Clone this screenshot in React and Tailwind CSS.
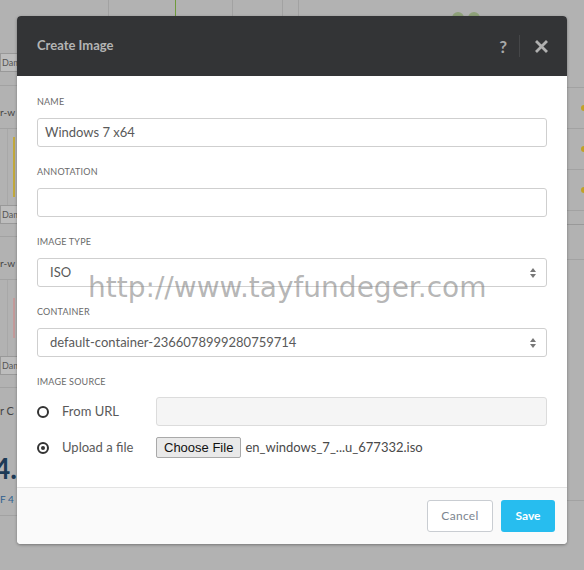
import React from "react";

function Radio({ checked }) {
  return (
    <span className="flex h-[12px] w-[12px] items-center justify-center rounded-full border-[2px] border-[#333]">
      {checked ? <span className="h-[4px] w-[4px] rounded-full bg-[#333]" /> : null}
    </span>
  );
}

function SelectArrows() {
  return (
    <svg width="8" height="12" viewBox="0 0 8 12" className="text-[#777]">
      <path d="M4 1 L7 5 L1 5 Z" fill="currentColor" />
      <path d="M4 11 L7 7 L1 7 Z" fill="currentColor" />
    </svg>
  );
}

function Label({ children }) {
  return (
    <div className="text-[9px] uppercase leading-[12px] tracking-[0.2px] text-[#6a6a6a]">{children}</div>
  );
}

function DamBox() {
  return (
    <div className="h-[19px] w-[20px] shrink-0 border border-[#999] bg-[#bdbdbd] pl-[1px] text-[9px] leading-[17px] text-[#555]">
      Dam
    </div>
  );
}

function ChartCell({ color, h }) {
  return (
    <div className="flex h-[77px] shrink-0 border-t border-[#a2a2a2]">
      <div className="w-[8px] border-r border-[#a8a8a8]" />
      <div className="flex items-center pl-[5px]">
        <div className={`w-[2px] ${h} ${color}`} />
      </div>
    </div>
  );
}

export default function App() {
  return (
    <div className="relative h-[570px] w-[584px] overflow-hidden bg-[#b2b2b2] font-['Lato',sans-serif]">
      {/* dimmed page behind the modal */}
      <div className="flex h-full w-full">
        <div className="flex w-[22px] shrink-0 flex-col text-[#444]">
          <div className="h-[53px] shrink-0" />
          <DamBox />
          <div className="h-[13px] shrink-0" />
          <div className="flex h-[43px] shrink-0 items-center border-t border-[#a2a2a2] pt-[10px] text-[10px]">r-w</div>
          <ChartCell color="bg-[#c2a93c]" h="h-[60px]" />
          <DamBox />
          <div className="h-[12px] shrink-0" />
          <div className="flex h-[43px] shrink-0 items-center border-t border-[#a2a2a2] pt-[10px] text-[10px]">r-w</div>
          <ChartCell color="bg-[#c49a9a]" h="h-[40px]" />
          <DamBox />
          <div className="h-[12px] shrink-0" />
          <div className="flex h-[40px] shrink-0 items-center border-t border-[#a2a2a2] pt-[8px] text-[11px]">r C</div>
          <div className="ml-[-6px] mt-[25px] text-[28px] font-bold leading-[32px] text-[#1d3a56]">4.0</div>
          <div className="mt-[8px] text-[10px] text-[#2f5f8f]">F 4</div>
          <div className="mt-[8px] h-[1px] bg-[#a2a2a2]" />
        </div>

        <div className="flex flex-1 items-start">
          <div className="ml-[86px] h-[16px] w-[1px] bg-[#a2a2a2]" />
          <div className="ml-[66px] h-[16px] w-[1px] bg-[#6f9a3c]" />
          <div className="ml-[56px] h-[16px] w-[1px] bg-[#a2a2a2]" />
          <div className="ml-[49px] h-[16px] w-[1px] bg-[#a2a2a2]" />
          <div className="ml-[15px] h-[16px] w-[1px] bg-[#a2a2a2]" />
          <div className="ml-[153px] mt-[12px] flex gap-[4px]">
            <div className="h-[8px] w-[12px] rounded-t-full bg-[#8fa27a]" />
            <div className="h-[8px] w-[12px] rounded-t-full bg-[#8fa27a]" />
          </div>
        </div>

        <div className="flex w-[20px] shrink-0 flex-col">
          <div className="h-[87px] shrink-0" />
          {[0, 1, 2].map((i) => (
            <div key={i} className="flex h-[41px] shrink-0 items-center justify-end border-t border-[#a2a2a2]">
              <div className="mr-[-3px] h-[6px] w-[6px] rounded-full bg-[#c2a227]" />
            </div>
          ))}
          <div className="h-[14px] shrink-0 border-t border-[#a2a2a2]" />
          <div className="h-[35px] shrink-0 border-t border-[#999]" />
          <div className="h-[241px] shrink-0 border-t border-[#a2a2a2]" />
          <div className="h-[1px] shrink-0 bg-[#a2a2a2]" />
        </div>
      </div>

      {/* modal */}
      <div className="absolute left-[17px] top-[16px] flex h-[528px] w-[550px] flex-col overflow-hidden rounded-[4px] bg-white shadow-[0_1px_3px_rgba(0,0,0,0.35)]">
        <div className="flex h-[60px] shrink-0 items-center bg-[#333436] pl-[20px] pr-[19px]">
          <div className="flex-1 text-[13px] font-bold text-[#b4b4b4]">Create Image</div>
          <div className="text-[17px] font-bold leading-none text-[#a9a9a9]">?</div>
          <div className="ml-[12px] mr-[15px] h-[22px] w-[1px] bg-[#454648]" />
          <svg width="13" height="13" viewBox="0 0 13 13">
            <path d="M2 2 L11 11 M11 2 L2 11" stroke="#b0b0b0" strokeWidth="2.8" strokeLinecap="square" />
          </svg>
        </div>

        <div className="flex flex-1 flex-col px-[20px] pt-[20px]">
          <Label>Name</Label>
          <div className="mt-[10px] flex h-[29px] items-center rounded-[3px] border border-[#cfcfcf] px-[7px] text-[13px] text-[#5a5a5a]">
            Windows 7 x64
          </div>

          <div className="mt-[19px]"><Label>Annotation</Label></div>
          <div className="mt-[10px] h-[29px] rounded-[3px] border border-[#cfcfcf]" />

          <div className="mt-[19px]"><Label>Image Type</Label></div>
          <div className="mt-[10px] flex h-[29px] items-center rounded-[3px] border border-[#cfcfcf] pl-[12px] pr-[9px] text-[13px] text-[#5a5a5a]">
            <span className="flex-1">ISO</span>
            <SelectArrows />
          </div>

          <div className="mt-[19px]"><Label>Container</Label></div>
          <div className="mt-[10px] flex h-[29px] items-center rounded-[3px] border border-[#cfcfcf] pl-[12px] pr-[9px] text-[13px] text-[#5a5a5a]">
            <span className="flex-1">default-container-2366078999280759714</span>
            <SelectArrows />
          </div>

          <div className="mt-[19px]"><Label>Image Source</Label></div>
          <div className="mt-[9px] flex h-[29px] items-center">
            <Radio />
            <span className="ml-[13px] w-[94px] text-[13px] text-[#5a5a5a]">From URL</span>
            <div className="h-[29px] flex-1 rounded-[3px] border border-[#dcdcdc] bg-[#f5f5f5]" />
          </div>
          <div className="mt-[7px] flex h-[29px] items-center">
            <Radio checked />
            <span className="ml-[13px] w-[94px] text-[13px] text-[#5a5a5a]">Upload a file</span>
            <button className="h-[21px] rounded-[2px] border border-[#a9a9a9] bg-[#e9e9e9] px-[7px] font-['Liberation_Sans',sans-serif] text-[13px] leading-[19px] text-[#111]">
              Choose File
            </button>
            <span className="ml-[4px] text-[13px] text-[#4a4a4a]">en_windows_7_...u_677332.iso</span>
          </div>
        </div>

        <div className="flex h-[57px] shrink-0 items-center justify-end gap-[8px] border-t border-[#e3e3e3] bg-[#fafafa] pr-[12px]">
          <button className="h-[32px] w-[66px] rounded-[3px] border border-[#c9cdd2] bg-white text-[12px] tracking-[0.3px] text-[#7c8590]">
            Cancel
          </button>
          <button className="h-[32px] w-[54px] rounded-[3px] bg-[#27bdef] text-[12px] font-bold text-white">
            Save
          </button>
        </div>
      </div>

      {/* watermark */}
      <div className="pointer-events-none absolute left-[88px] top-[270px] font-['DejaVu_Sans',sans-serif] text-[28px] leading-[36px] text-[rgba(120,120,120,0.55)]">
        http://www.tayfundeger.com
      </div>
    </div>
  );
}
